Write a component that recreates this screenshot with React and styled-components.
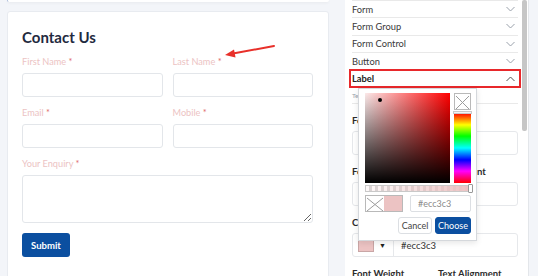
import React from "react";
import styled, { createGlobalStyle } from "styled-components";

const GlobalStyle = createGlobalStyle`
  html, body {
    margin: 0;
    padding: 0;
    background: #f3f5f9;
  }
  body {
    font-family: Lato, "Open Sans", sans-serif;
  }
  * {
    box-sizing: border-box;
  }
`;

const Page = styled.div`
  display: flex;
  width: 538px;
  height: 276px;
  overflow: hidden;
`;

/* ---------- left: the form preview ---------- */

const LeftCol = styled.div`
  position: relative;
  flex-shrink: 0;
  width: 345px;
  padding: 0 16px 0 7px;
`;

const TopStub = styled.div`
  height: 2px;
  margin-bottom: 9px;
  background: #fff;
  border-left: 1px solid #a9bbdb;
  border-radius: 0 0 3px 3px;
  box-shadow: 0 1px 3px rgba(0, 0, 0, 0.06);
`;

const Card = styled.div`
  height: 290px;
  padding: 15px 15px 20px 14px;
  background: #fff;
  border: 1px solid #e8ebf0;
  border-radius: 3px;
`;

const Title = styled.h1`
  margin: 0 0 9px;
  font-size: 15px;
  line-height: 20px;
  font-weight: 700;
  color: #1f2a40;
`;

const FormGrid = styled.div`
  display: grid;
  grid-template-columns: minmax(0, 1fr) minmax(0, 1fr);
  column-gap: 10px;
  row-gap: 10px;
`;

const Field = styled.div`
  display: flex;
  flex-direction: column;
  min-width: 0;
  grid-column: ${(p) => (p.$wide ? "1 / -1" : "auto")};
`;

const Label = styled.label`
  margin-bottom: 5px;
  font-size: 9.2px;
  line-height: 12px;
  color: #ecc3c3;
`;

const Req = styled.span`
  color: #e06a6a;
`;

const TextInput = styled.input`
  width: 100%;
  min-width: 0;
  height: 24px;
  padding: 0 6px;
  border: 1px solid #e3e6ea;
  border-radius: 3px;
  background: #fff;
  outline: none;
`;

const TextArea = styled.textarea`
  width: 100%;
  height: 48px;
  padding: 4px 6px;
  border: 1px solid #e3e6ea;
  border-radius: 3px;
  background: #fff;
  outline: none;
`;

const SubmitButton = styled.button`
  width: 48px;
  height: 24px;
  margin-top: 10px;
  padding: 0;
  border: none;
  border-radius: 3px;
  background: #0b4fa0;
  color: #fff;
  font-family: inherit;
  font-size: 9.5px;
  font-weight: 700;
`;

const Arrow = styled.svg`
  position: absolute;
  left: 220px;
  top: 40px;
`;

/* ---------- right: the style panel ---------- */

const Panel = styled.div`
  display: flex;
  flex-shrink: 0;
  width: 184px;
  background: #fff;
  border-right: 1px solid #e3e6ea;
`;

const PanelContent = styled.div`
  position: relative;
  flex: 1;
  padding: 0 2px 0 7px;
  color: #333;
`;

const ScrollTrack = styled.div`
  width: 8px;
  padding-left: 2px;
`;

const ScrollThumb = styled.div`
  width: 4.5px;
  height: 131px;
  background: #c6c6c6;
  border-radius: 2px;
`;

const Rest = styled.div`
  flex: 1;
  background: #f3f5f9;
`;

const AccRow = styled.div`
  display: flex;
  align-items: center;
  justify-content: space-between;
  height: ${(p) => (p.$active ? "13px" : "17.33px")};
  margin-top: ${(p) => (p.$active ? "3px" : "0")};
  padding-right: 3px;
  border-top: ${(p) => (p.$active ? "none" : "1px solid #e9e9e9")};
  outline: ${(p) => (p.$active ? "2px solid #e8282b" : "none")};
  outline-offset: 1px;
  font-size: 9.3px;
  font-weight: ${(p) => (p.$active ? 700 : 400)};
  color: ${(p) => (p.$active ? "#222" : "#3a3a3a")};
`;

const SubTab = styled.div`
  height: 19px;
  padding-top: 6px;
  font-size: 6.5px;
  line-height: 9px;
  color: #9aa3ad;
  border-bottom: 1px solid #e9e9e9;
`;

const PanelField = styled.div`
  margin-top: 11px;
`;

const PanelGrid = styled.div`
  display: grid;
  grid-template-columns: minmax(0, 1fr) minmax(0, 1fr);
  column-gap: 6px;
`;

const PanelLabel = styled.div`
  margin-bottom: 4px;
  font-size: 9.5px;
  line-height: 12px;
  font-weight: 700;
  color: #2b2b2b;
  white-space: nowrap;
`;

const PanelInput = styled.div`
  display: flex;
  align-items: center;
  height: 24px;
  border: 1px solid #e6e8eb;
  border-radius: 3px;
  font-size: 9.5px;
  color: #333;
`;

const SwatchPart = styled.div`
  display: flex;
  align-items: center;
  gap: 5px;
  height: 100%;
  padding: 0 7px 0 5px;
  border-right: 1px solid #e6e8eb;
`;

const Swatch = styled.div`
  width: 16px;
  height: 13px;
  background: ${(p) => p.$color};
  border: 1px solid #c9a6a6;
`;

const Caret = styled.span`
  font-size: 7px;
  color: #222;
`;

const ValueText = styled.span`
  padding-left: 7px;
`;

/* ---------- colour picker popup ---------- */

const Picker = styled.div`
  position: absolute;
  left: 13px;
  top: 88px;
  width: 119px;
  height: 153px;
  padding: 4px 5px 0 6px;
  background: #fff;
  border: 1px solid #d5d8dc;
  box-shadow: 0 2px 6px rgba(0, 0, 0, 0.1);
`;

const PickerTop = styled.div`
  display: flex;
  gap: 4px;
`;

const SatBox = styled.div`
  position: relative;
  width: 85px;
  height: 90px;
  background: linear-gradient(to top, #000, rgba(0, 0, 0, 0)),
    linear-gradient(to right, #fbeaea, #ff0000);
`;

const SatDot = styled.div`
  position: absolute;
  left: 13px;
  top: 5px;
  width: 4px;
  height: 4px;
  border-radius: 50%;
  background: #000;
`;

const HueCol = styled.div`
  display: flex;
  flex-direction: column;
  gap: 3px;
  width: 17px;
`;

const ClearBox = styled.div`
  height: 17px;
  border: 1px solid #b9b9b9;
  background: #fff;
`;

const HueStrip = styled.div`
  position: relative;
  flex: 1;
  background: linear-gradient(
    to bottom,
    #f00 0%,
    #ff0 17%,
    #0f0 33%,
    #0ff 50%,
    #00f 67%,
    #f0f 83%,
    #f00 100%
  );
`;

const HueHandle = styled.div`
  position: absolute;
  left: -1px;
  right: -1px;
  top: -2px;
  height: 3px;
  background: #f4f4f4;
  border: 1px solid #c9c9c9;
`;

const AlphaBar = styled.div`
  position: relative;
  width: 107px;
  height: 7px;
  margin-top: 2px;
  border: 1px solid #c9c9c9;
  background: linear-gradient(to right, rgba(236, 195, 195, 0.1), #ecc3c3),
    repeating-linear-gradient(to right, #fff 0 3px, #d6d6d6 3px 6px);
`;

const AlphaHandle = styled.div`
  position: absolute;
  right: -2px;
  top: -2px;
  width: 5px;
  height: 9px;
  background: #fff;
  border: 1px solid #999;
  border-radius: 1px;
`;

const PreviewRow = styled.div`
  display: flex;
  gap: 7px;
  margin-top: 3px;
  height: 17px;
`;

const Preview = styled.div`
  display: flex;
  width: 38px;
  border: 1px solid #b9b9b9;
`;

const PreviewHalf = styled.div`
  flex: 1;
  background: ${(p) => p.$color};
`;

const HexField = styled.div`
  display: flex;
  align-items: center;
  width: 61px;
  padding-left: 7px;
  border: 1px solid #dcdfe3;
  border-radius: 2px;
  font-size: 9px;
  color: #8a8a8a;
`;

const ButtonRow = styled.div`
  display: flex;
  justify-content: flex-end;
  gap: 3px;
  margin-top: 5px;
`;

const PickerButton = styled.button`
  height: 17px;
  width: ${(p) => p.$w}px;
  padding: 0;
  border: 1px solid ${(p) => (p.$primary ? "#0b4fa0" : "#dcdfe3")};
  border-radius: 3px;
  background: ${(p) => (p.$primary ? "#0b4fa0" : "#fff")};
  color: ${(p) => (p.$primary ? "#fff" : "#444")};
  font-family: inherit;
  font-size: 9px;
`;

const Chevron = ({ up }) => (
  <svg width="9" height="6" viewBox="0 0 9 6">
    <polyline
      points={up ? "0.5,5 4.5,1 8.5,5" : "0.5,1 4.5,5 8.5,1"}
      fill="none"
      stroke={up ? "#555" : "#9aa1ab"}
      strokeWidth="1"
    />
  </svg>
);

const Cross = ({ w, h }) => (
  <svg width={w} height={h} viewBox={`0 0 ${w} ${h}`}>
    <line x1="1" y1="1" x2={w - 1} y2={h - 1} stroke="#9c9c9c" strokeWidth="1" />
    <line x1={w - 1} y1="1" x2="1" y2={h - 1} stroke="#9c9c9c" strokeWidth="1" />
  </svg>
);

const sections = ["Form", "Form Group", "Form Control", "Button"];

export default function App() {
  return (
    <Page>
      <GlobalStyle />
      <LeftCol>
        <TopStub />
        <Card>
          <Title>Contact Us</Title>
          <FormGrid>
            <Field>
              <Label>First Name <Req>*</Req></Label>
              <TextInput />
            </Field>
            <Field>
              <Label>Last Name <Req>*</Req></Label>
              <TextInput />
            </Field>
            <Field>
              <Label>Email <Req>*</Req></Label>
              <TextInput />
            </Field>
            <Field>
              <Label>Mobile <Req>*</Req></Label>
              <TextInput />
            </Field>
            <Field $wide>
              <Label>Your Enquiry <Req>*</Req></Label>
              <TextArea />
            </Field>
          </FormGrid>
          <SubmitButton>Submit</SubmitButton>
        </Card>
        <Arrow width="60" height="22" viewBox="0 0 60 22">
          <line x1="54" y1="6" x2="13" y2="13.6" stroke="#e8302a" strokeWidth="2" strokeLinecap="round" />
          <polygon points="5,15 15.5,17.6 14,9.4" fill="#e8302a" />
        </Arrow>
      </LeftCol>

      <Panel>
        <PanelContent>
          {sections.map((s) => (
            <AccRow key={s}>
              {s}
              <Chevron />
            </AccRow>
          ))}
          <AccRow $active>
            Label
            <Chevron up />
          </AccRow>
          <SubTab>Text Styles</SubTab>

          <PanelField>
            <PanelLabel>Font Family</PanelLabel>
            <PanelInput />
          </PanelField>
          <PanelField>
            <PanelGrid>
              <div>
                <PanelLabel>Font Size</PanelLabel>
                <PanelInput />
              </div>
              <div>
                <PanelLabel>Text Indent</PanelLabel>
                <PanelInput />
              </div>
            </PanelGrid>
          </PanelField>
          <PanelField>
            <PanelLabel>Color</PanelLabel>
            <PanelInput>
              <SwatchPart>
                <Swatch $color="#ecc3c3" />
                <Caret>▼</Caret>
              </SwatchPart>
              <ValueText>#ecc3c3</ValueText>
            </PanelInput>
          </PanelField>
          <PanelField>
            <PanelGrid>
              <PanelLabel>Font Weight</PanelLabel>
              <PanelLabel>Text Alignment</PanelLabel>
            </PanelGrid>
          </PanelField>

          <Picker>
            <PickerTop>
              <SatBox>
                <SatDot />
              </SatBox>
              <HueCol>
                <ClearBox>
                  <Cross w={15} h={15} />
                </ClearBox>
                <HueStrip>
                  <HueHandle />
                </HueStrip>
              </HueCol>
            </PickerTop>
            <AlphaBar>
              <AlphaHandle />
            </AlphaBar>
            <PreviewRow>
              <Preview>
                <PreviewHalf $color="#fff">
                  <Cross w={18} h={15} />
                </PreviewHalf>
                <PreviewHalf $color="#ecc3c3" />
              </Preview>
              <HexField>#ecc3c3</HexField>
            </PreviewRow>
            <ButtonRow>
              <PickerButton $w={34}>Cancel</PickerButton>
              <PickerButton $w={36} $primary>Choose</PickerButton>
            </ButtonRow>
          </Picker>
        </PanelContent>
        <ScrollTrack>
          <ScrollThumb />
        </ScrollTrack>
      </Panel>
      <Rest />
    </Page>
  );
}
